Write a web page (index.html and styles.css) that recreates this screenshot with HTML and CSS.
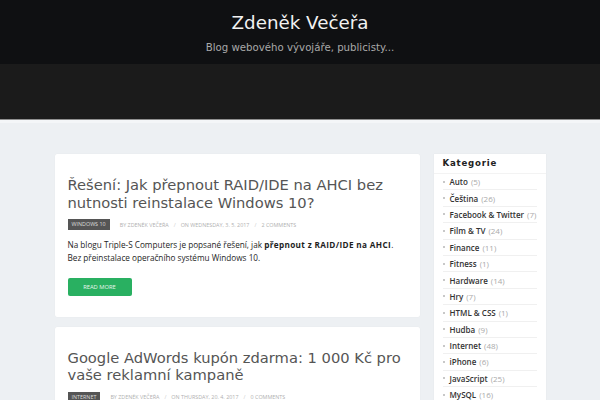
FILE: index.html
```html
<!DOCTYPE html>
<html lang="cs">
<head>
<meta charset="utf-8">
<title>Zdeněk Večeřa</title>
<link rel="stylesheet" href="styles.css">
</head>
<body>
<header class="site-header">
  <div class="brand">
    <h1 class="site-title">Zdeněk Večeřa</h1>
    <p class="site-desc">Blog webového vývojáře, publicisty...</p>
  </div>
  <div class="band"></div>
</header>
<div class="wrap">
  <main class="posts">
    <article class="card">
      <h2 class="post-title">Řešení: Jak přepnout RAID/IDE na AHCI bez nutnosti reinstalace Windows 10?</h2>
      <div class="meta">
        <span class="tag">Windows 10</span>
        <span class="meta-item">By Zdeněk Večeřa</span>
        <span class="sep">/</span>
        <span class="meta-item">On Wednesday, 3. 5. 2017</span>
        <span class="sep">/</span>
        <span class="meta-item">2 Comments</span>
      </div>
      <p class="excerpt">Na blogu Triple-S Computers je popsané řešení, jak <strong>přepnout z RAID/IDE na AHCI</strong>. Bez přeinstalace operačního systému Windows 10.</p>
      <a class="btn" href="#">Read More</a>
    </article>
    <article class="card">
      <h2 class="post-title">Google AdWords kupón zdarma: 1 000 Kč pro vaše reklamní kampaně</h2>
      <div class="meta">
        <span class="tag">Internet</span>
        <span class="meta-item">By Zdeněk Večeřa</span>
        <span class="sep">/</span>
        <span class="meta-item">On Thursday, 20. 4. 2017</span>
        <span class="sep">/</span>
        <span class="meta-item">0 Comments</span>
      </div>
    </article>
  </main>
  <aside class="sidebar">
    <h3 class="widget-title">Kategorie</h3>
    <ul class="cats">
      <li><a href="#">Auto</a> <span class="count">(5)</span></li>
      <li><a href="#">Čeština</a> <span class="count">(26)</span></li>
      <li><a href="#">Facebook &amp; Twitter</a> <span class="count">(7)</span></li>
      <li><a href="#">Film &amp; TV</a> <span class="count">(24)</span></li>
      <li><a href="#">Finance</a> <span class="count">(11)</span></li>
      <li><a href="#">Fitness</a> <span class="count">(1)</span></li>
      <li><a href="#">Hardware</a> <span class="count">(14)</span></li>
      <li><a href="#">Hry</a> <span class="count">(7)</span></li>
      <li><a href="#">HTML &amp; CSS</a> <span class="count">(1)</span></li>
      <li><a href="#">Hudba</a> <span class="count">(9)</span></li>
      <li><a href="#">Internet</a> <span class="count">(48)</span></li>
      <li><a href="#">iPhone</a> <span class="count">(6)</span></li>
      <li><a href="#">JavaScript</a> <span class="count">(25)</span></li>
      <li><a href="#">MySQL</a> <span class="count">(16)</span></li>
    </ul>
  </aside>
</div>
</body>
</html>
```
FILE: styles.css
```css
html, body {
  margin: 0;
  padding: 0;
}
body {
  background: #edf0f3;
  font-family: "Open Sans", "DejaVu Sans", sans-serif;
  overflow: hidden;
  height: 400px;
}
.site-header {
  background: #0f1012;
}
.brand {
  height: 64px;
  box-sizing: border-box;
  padding-top: 11.7px;
  text-align: center;
}
.site-title {
  margin: 0;
  font-family: "DejaVu Sans", sans-serif;
  font-weight: normal;
  font-size: 18.3px;
  line-height: 22px;
  color: #f2f2f2;
}
.site-desc {
  margin: 7.3px 0 0;
  font-family: "DejaVu Sans", sans-serif;
  font-size: 10.2px;
  line-height: 13px;
  color: #a9a9a9;
}
.band {
  height: 55px;
  background: #1b1b1b;
  border-bottom: 1px solid #8f8f8f;
  box-shadow: 0 3px 0 #f4f6f8;
}
.wrap {
  width: 491px;
  margin: 34px auto 0;
  display: flex;
  gap: 14px;
  align-items: flex-start;
}
.posts {
  width: 365px;
  display: flex;
  flex-direction: column;
  gap: 10px;
}
.card {
  background: #fff;
  padding: 22px 13px 21px;
  box-shadow: 0 0 1px rgba(0,0,0,0.08);
  border-radius: 2px;
}
.post-title {
  margin: 0;
  font-family: "DejaVu Sans", sans-serif;
  font-weight: normal;
  font-size: 14.7px;
  line-height: 17.6px;
  color: #555;
}
.meta {
  margin-top: 8px;
  display: flex;
  align-items: center;
  height: 11px;
  font-size: 5.4px;
  text-transform: uppercase;
  color: #b0b0b0;
}
.tag {
  background: #555;
  color: #ddd;
  height: 11px;
  line-height: 11px;
  padding: 0 4px;
  margin-right: 10px;
}
.sep {
  margin: 0 5px;
  color: #ccc;
}
.excerpt {
  margin: 9.3px 0 0;
  font-size: 8.2px;
  line-height: 12.8px;
  color: #1e1e1e;
}
.excerpt strong {
  font-weight: 700;
  letter-spacing: 0.35px;
}
.btn {
  display: block;
  width: 64px;
  height: 18px;
  line-height: 18px;
  margin-top: 12.7px;
  background: #29b061;
  color: #e8f6ee;
  text-align: center;
  text-decoration: none;
  text-transform: uppercase;
  font-size: 5.8px;
  border-radius: 2px;
}
.sidebar {
  width: 112px;
  background: #fff;
  box-sizing: border-box;
  padding: 0 9px;
  box-shadow: 0 0 1px rgba(0,0,0,0.08);
}
.widget-title {
  margin: 0 -9px;
  padding: 0 9px;
  font-family: "DejaVu Sans", sans-serif;
  font-size: 8.6px;
  font-weight: bold;
  letter-spacing: 0.8px;
  line-height: 19px;
  color: #222;
  border-bottom: 1px solid #f3f3f3;
}
.cats {
  list-style: none;
  margin: 0;
  padding: 0;
}
.cats li {
  display: flex;
  align-items: center;
  gap: 3px;
  height: 15.4px;
  border-bottom: 1px solid #f0f0f0;
  font-size: 8px;
  white-space: nowrap;
}
.cats li::before {
  content: "";
  width: 2px;
  height: 2px;
  background: #c8c8c8;
  margin-right: 2px;
}
.cats a {
  color: #333;
  font-weight: 600;
  text-decoration: none;
}
.count {
  color: #aaa;
}
```
